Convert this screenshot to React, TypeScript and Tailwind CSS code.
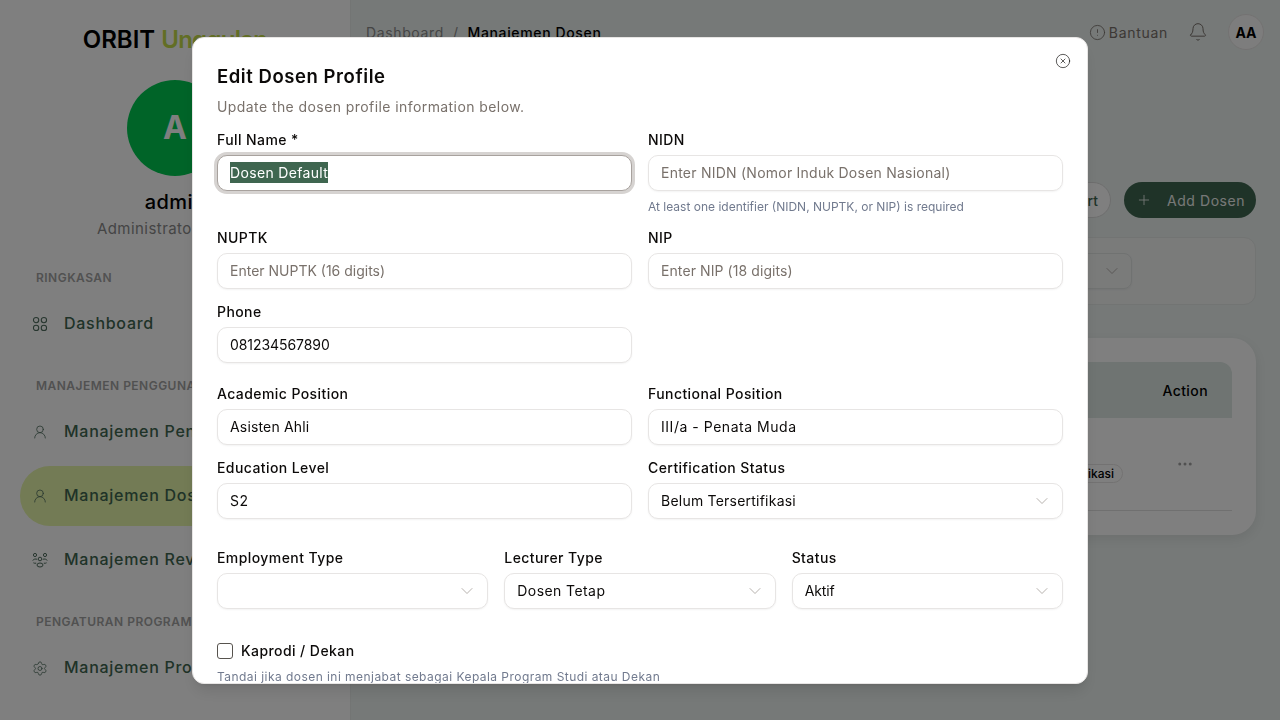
import React from "react";
import { Bell, ChevronDown, CircleAlert, CircleX, Ellipsis, Plus, Settings, UserRound } from "lucide-react";

const font = "font-['Inter','Liberation_Sans',sans-serif]";

function GridIcon() {
  return (
    <svg width="18" height="18" viewBox="0 0 18 18" fill="none" stroke="currentColor" strokeWidth="1.2">
      <rect x="1.6" y="1.6" width="6" height="6" rx="3" />
      <rect x="10.4" y="1.6" width="6" height="6" rx="3" />
      <rect x="1.6" y="10.4" width="6" height="6" rx="3" />
      <rect x="10.4" y="10.4" width="6" height="6" rx="3" />
    </svg>
  );
}

function TeamIcon() {
  return (
    <svg width="16" height="16" viewBox="0 0 16 16" fill="none" stroke="currentColor" strokeWidth="1">
      <circle cx="3" cy="3" r="1.6" />
      <circle cx="13" cy="3" r="1.6" />
      <circle cx="8" cy="7" r="1.8" />
      <ellipse cx="8" cy="13" rx="3" ry="2" />
      <path d="M.8 8.6C1.2 7 4 6.6 5.2 7.4M15.2 8.6c-.4-1.6-3.2-2-4.4-1.2M1.4 10.8c.8.5 1.8.6 2.8.4M14.6 10.8c-.8.5-1.8.6-2.8.4" />
    </svg>
  );
}

function SectionLabel({ children }: { children: React.ReactNode }) {
  return <div className="px-9 h-4 leading-4 text-[12px] font-semibold tracking-[0.04em] text-[#a3a3a3] whitespace-nowrap">{children}</div>;
}

function NavItem({ icon, label, active }: { icon: React.ReactNode; label: string; active?: boolean }) {
  return (
    <div className={`mx-5 h-[60px] rounded-full flex items-center gap-4 px-3 text-[#3f6650] ${active ? "bg-[#e6f6aa]" : ""}`}>
      <span className="w-4 flex justify-center shrink-0 text-[#4f6d5e]">{icon}</span>
      <span className="text-[16px] font-medium tracking-[0.045em] whitespace-nowrap -translate-y-px">{label}</span>
    </div>
  );
}

function Sidebar() {
  return (
    <aside className="w-[350px] h-full shrink-0 bg-white shadow-[0_0_6px_rgba(0,0,0,0.08)] overflow-hidden flex flex-col">
      <div className="mt-[22px] h-9 leading-9 text-center text-[24px] font-semibold text-black whitespace-nowrap">
        ORBIT <span className="text-[#c4dc4a] tracking-[-0.03em]">Unggulan</span>
      </div>
      <div className="mt-[22px] mx-auto w-24 h-24 rounded-full bg-green-500 flex items-center justify-center text-white text-[32px] font-bold">A</div>
      <div className="mt-3 h-7 leading-7 text-center text-[20px] font-medium text-black tracking-[0.02em]">admin</div>
      <div className="mt-[1px] h-6 leading-6 text-center text-[15px] text-[#8a8a8a] tracking-[0.03em] whitespace-nowrap">Administrator Sistem</div>
      <div className="mt-[29px]"><SectionLabel>RINGKASAN</SectionLabel></div>
      <div className="mt-2"><NavItem icon={<GridIcon />} label="Dashboard" /></div>
      <div className="mt-6"><SectionLabel>MANAJEMEN PENGGUNA</SectionLabel></div>
      <div className="mt-2 flex flex-col gap-1">
        <NavItem icon={<UserRound size={16} strokeWidth={1.2} />} label="Manajemen Pengguna" />
        <NavItem icon={<UserRound size={16} strokeWidth={1.2} />} label="Manajemen Dosen" active />
        <NavItem icon={<TeamIcon />} label="Manajemen Reviewer" />
      </div>
      <div className="mt-6"><SectionLabel>PENGATURAN PROGRAM</SectionLabel></div>
      <div className="mt-2"><NavItem icon={<Settings size={17} strokeWidth={1.2} />} label="Manajemen Program" /></div>
    </aside>
  );
}

function Main() {
  return (
    <main className="flex-1 h-full overflow-hidden bg-[#ecf2f0] border-l border-[#e6ebe9]">
      <header className="h-16 pl-[15px] pr-4 flex items-center justify-between">
        <div className="flex items-center gap-[9px] text-[14px] tracking-[0.045em]">
          <span className="text-[#8a8a8a]">Dashboard</span>
          <span className="text-[#8a8a8a]">/</span>
          <span className="font-medium text-black">Manajemen Dosen</span>
        </div>
        <div className="flex items-center">
          <CircleAlert size={17} strokeWidth={1.2} className="text-[#79716b]" />
          <span className="ml-[3px] text-[14px] text-[#79716b] tracking-[0.05em]">Bantuan</span>
          <Bell size={20} strokeWidth={1.2} className="ml-5 text-[#79716b]" />
          <div className="ml-5 w-9 h-9 rounded-full border border-[#e7e5e4] bg-[#fbfbfb] flex items-center justify-center text-[14px] font-bold text-black">AA</div>
        </div>
      </header>
      <div className="px-6">
        <div className="mt-[118px] h-9 flex items-center justify-between">
          <div className="text-[24px] font-semibold text-black">Manajemen Dosen</div>
          <div className="flex items-center gap-[13px]">
            <button className="h-9 pl-4 pr-[12px] rounded-full border border-[#dcdcdc] bg-white text-[14px] font-medium text-[#3f6650]">Import / Export</button>
            <button className="h-9 w-[132px] pl-[12px] rounded-full bg-[#3f6650] flex items-center text-[#eef1ef] text-[14px] font-normal tracking-[0.04em]">
              <Plus size={16} strokeWidth={1.3} />
              <span className="ml-[15px]">Add Dosen</span>
            </button>
          </div>
        </div>
        <div className="mt-[19px] h-[68px] rounded-xl border border-[#e4e8e6] bg-[#f4f6f5] flex items-center justify-end pr-[123px]">
          <div className="w-[180px] h-9 rounded-lg border border-[#e0e4e2] flex items-center justify-end pr-[9px] shadow-xs">
            <ChevronDown size={20} strokeWidth={1} className="text-[#a8a29e]" />
          </div>
        </div>
        <div className="mt-[33px] h-[197px] rounded-3xl bg-white p-6 shadow-[0_4px_12px_rgba(0,0,0,0.08)]">
          <div className="h-14 rounded-t-xl bg-[#dee8e4] flex items-center justify-end pr-6 text-[14px] font-medium text-black tracking-[0.03em]">Action</div>
          <div className="h-[93px] border-b border-[#e0e0e0] flex items-center justify-end">
            <div className="flex flex-col items-end pt-[18px]">
              <span className="h-[19px] px-2 rounded-full border border-[#e7e5e4] text-[12px] leading-[17px] font-medium text-black whitespace-nowrap">Belum Tersertifikasi</span>
            </div>
            <div className="w-[109px] flex justify-center pl-[15px]">
              <Ellipsis size={18} strokeWidth={2} className="text-[#a3a3a3]" />
            </div>
          </div>
        </div>
      </div>
    </main>
  );
}

const fieldBox = "w-full h-9 rounded-[10px] border border-[#e7e5e4] bg-white px-3 text-[14px] text-[#0c0a09] shadow-xs outline-none placeholder:text-[#79716b]";
const labelBox = "h-5 leading-5 mb-[5px] text-[14px] font-medium text-[#0c0a09] tracking-[0.03em]";

function Field({ label, value, placeholder, hint, tc }: { label: string; value?: string; placeholder?: string; hint?: string; tc: string }) {
  return (
    <div className="flex flex-col">
      <label className={labelBox}>{label}</label>
      <input readOnly value={value ?? ""} placeholder={placeholder} className={`${fieldBox} ${tc}`} />
      {hint && <p className="mt-2 h-4 leading-4 text-[12px] text-[#717a8e]">{hint}</p>}
    </div>
  );
}

function SelectField({ label, value, tc }: { label: string; value?: string; tc?: string }) {
  return (
    <div className="flex flex-col">
      <label className={labelBox}>{label}</label>
      <div className={`${fieldBox} flex items-center justify-between`}>
        <span className={tc}>{value}</span>
        <ChevronDown size={20} strokeWidth={1} className="text-[#a8a29e] -mr-[2px]" />
      </div>
    </div>
  );
}

function Modal() {
  return (
    <div className="fixed inset-0 bg-black/50 flex items-center justify-center">
      <div className="relative w-[896px] h-[647px] overflow-hidden rounded-xl border border-[#e7e5e4] bg-white px-6 pt-6 shadow-lg">
        <button className="absolute right-4 top-[15px] text-[#0c0a09]">
          <CircleX size={16} strokeWidth={1} />
        </button>
        <h2 className="h-7 leading-7 text-[18.5px] font-semibold text-[#0c0a09] tracking-[0.03em]">Edit Dosen Profile</h2>
        <p className="mt-[5px] h-6 leading-6 text-[14px] text-[#79716b] tracking-[0.03em]">Update the dosen profile information below.</p>
        <div className="mt-[11px] grid grid-cols-2 gap-x-4 gap-y-[13px]">
          <div className="flex flex-col">
            <label className={labelBox}>Full Name *</label>
            <div className="w-full h-9 rounded-[10px] border border-[#a8a29e] ring-[3px] ring-[#d6d3d1] bg-white px-3 flex items-center text-[14px] tracking-[0.024em] shadow-xs">
              <span className="bg-[#3f6650] text-white leading-[21px]">Dosen Default</span>
            </div>
          </div>
          <Field label="NIDN" placeholder="Enter NIDN (Nomor Induk Dosen Nasional)" hint="At least one identifier (NIDN, NUPTK, or NIP) is required" tc="tracking-[0.017em]" />
          <Field label="NUPTK" placeholder="Enter NUPTK (16 digits)" tc="tracking-normal" />
          <Field label="NIP" placeholder="Enter NIP (18 digits)" tc="tracking-[0.006em]" />
          <Field label="Phone" value="081234567890" tc="tracking-[-0.005em]" />
        </div>
        <div className="mt-[21px] grid grid-cols-2 gap-x-4 gap-y-[13px]">
          <Field label="Academic Position" value="Asisten Ahli" tc="tracking-[0.012em]" />
          <Field label="Functional Position" value="III/a - Penata Muda" tc="tracking-[0.038em]" />
          <Field label="Education Level" value="S2" tc="tracking-[0.03em]" />
          <SelectField label="Certification Status" value="Belum Tersertifikasi" tc="tracking-[0.016em]" />
        </div>
        <div className="mt-[29px] grid grid-cols-3 gap-x-4">
          <SelectField label="Employment Type" />
          <SelectField label="Lecturer Type" value="Dosen Tetap" tc="tracking-[0.03em]" />
          <SelectField label="Status" value="Aktif" tc="tracking-[-0.01em]" />
        </div>
        <div className="mt-[32px] flex items-center gap-2 h-5">
          <span className="w-4 h-4 rounded-[3px] border border-[#57534e] bg-white shrink-0" />
          <span className="text-[14px] font-medium text-[#0c0a09] tracking-[0.03em]">Kaprodi / Dekan</span>
        </div>
        <p className="mt-[8px] h-4 leading-4 text-[12px] text-[#717a8e] tracking-[0.0375em]">Tandai jika dosen ini menjabat sebagai Kepala Program Studi atau Dekan</p>
      </div>
    </div>
  );
}

export default function App() {
  return (
    <div className={`${font} relative w-full h-screen overflow-hidden flex bg-white`}>
      <Sidebar />
      <Main />
      <Modal />
    </div>
  );
}
